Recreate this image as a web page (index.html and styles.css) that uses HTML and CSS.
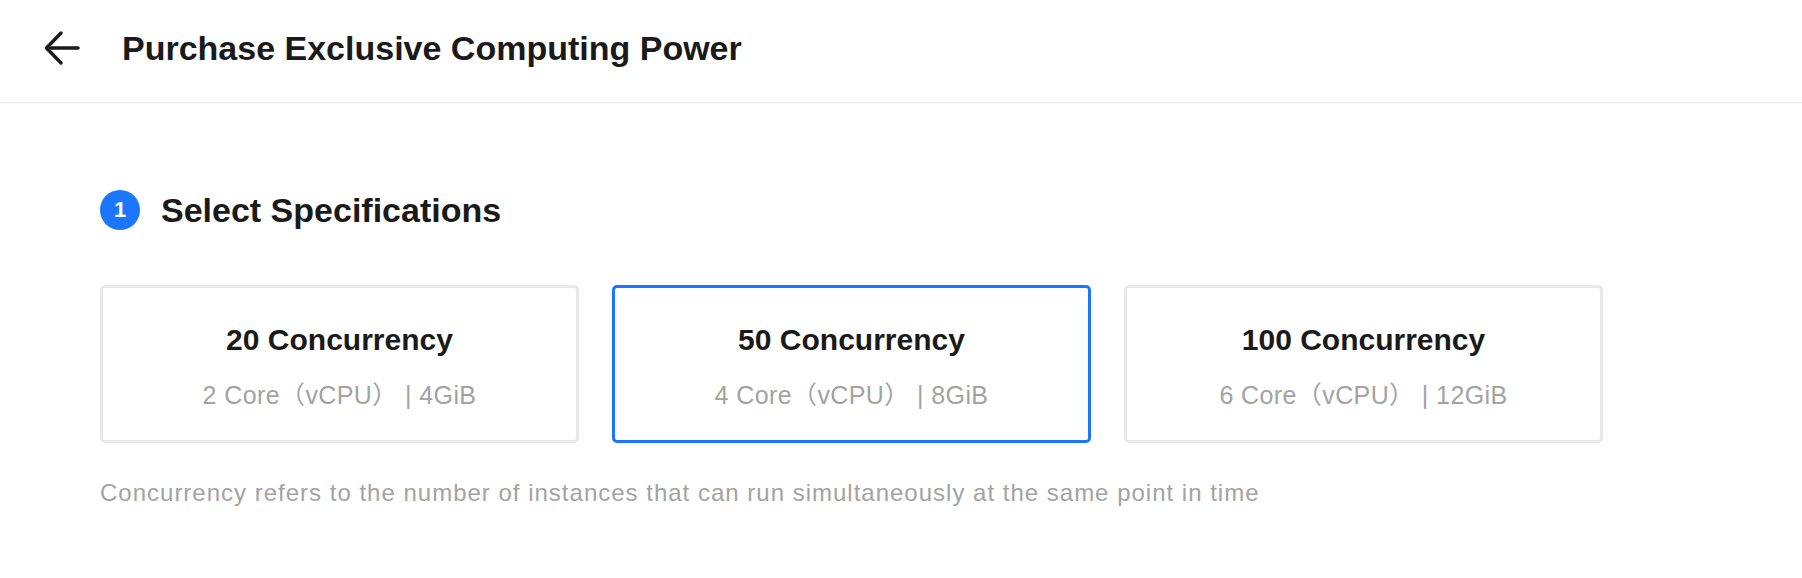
FILE: index.html
```html
<!DOCTYPE html>
<html lang="en">
<head>
  <meta charset="UTF-8">
  <title>Purchase Exclusive Computing Power</title>
  <link rel="stylesheet" href="styles.css">
</head>
<body>
  <header class="topbar">
    <a class="back" href="#">
      <svg width="36" height="34" viewBox="0 0 36 34" fill="none" stroke="#1a1a1a" stroke-width="3.4" stroke-linecap="round" stroke-linejoin="round">
        <path d="M3 17H34"/>
        <path d="M17 2L2.5 17L17 32"/>
      </svg>
    </a>
    <h1>Purchase Exclusive Computing Power</h1>
  </header>
  <main class="content">
    <div class="step">
      <span class="step-num">1</span>
      <h2>Select Specifications</h2>
    </div>
    <div class="specs">
      <div class="spec">
        <div class="spec-title">20 Concurrency</div>
        <div class="spec-sub">2 Core（vCPU） | 4GiB</div>
      </div>
      <div class="spec active">
        <div class="spec-title">50 Concurrency</div>
        <div class="spec-sub">4 Core（vCPU） | 8GiB</div>
      </div>
      <div class="spec">
        <div class="spec-title">100 Concurrency</div>
        <div class="spec-sub">6 Core（vCPU） | 12GiB</div>
      </div>
    </div>
    <p class="note">Concurrency refers to the number of instances that can run simultaneously at the same point in time</p>
  </main>
</body>
</html>
```

FILE: styles.css
```css
body {
  margin: 0;
  font-family: "Liberation Sans", "Noto Sans CJK SC", sans-serif;
  background: #fff;
  color: #1a1a1a;
}
.topbar {
  display: flex;
  align-items: center;
  height: 96px;
  padding: 0 0 6px 44px;
  border-bottom: 1px solid #e6e6e6;
}
.back {
  display: flex;
  margin-right: 42px;
}
.topbar h1 {
  margin: 0;
  font-size: 34px;
  font-weight: bold;
}
.content {
  padding: 87px 0 0 100px;
}
.step {
  display: flex;
  align-items: center;
}
.step-num {
  width: 40px;
  height: 40px;
  border-radius: 50%;
  background: #1b76fe;
  color: #fff;
  font-size: 22px;
  font-weight: bold;
  display: flex;
  align-items: center;
  justify-content: center;
  margin-right: 21px;
}
.step h2 {
  margin: 0;
  font-size: 34px;
  font-weight: bold;
}
.specs {
  display: flex;
  gap: 33px;
  margin-top: 55px;
}
.spec {
  box-sizing: border-box;
  width: 479px;
  height: 158px;
  padding-top: 4px;
  border: 3px solid #e8e8e8;
  border-radius: 5px;
  display: flex;
  flex-direction: column;
  align-items: center;
  justify-content: center;
}
.spec.active {
  border-color: #1b76fe;
}
.spec-title {
  font-size: 30px;
  line-height: 36px;
  font-weight: bold;
}
.spec-sub {
  margin-top: 22px;
  font-size: 25px;
  line-height: 30px;
  letter-spacing: 0.4px;
  color: #a3a3a3;
}
.note {
  margin: 36px 0 0;
  font-size: 24px;
  letter-spacing: 1px;
  color: #a3a3a3;
}
```
